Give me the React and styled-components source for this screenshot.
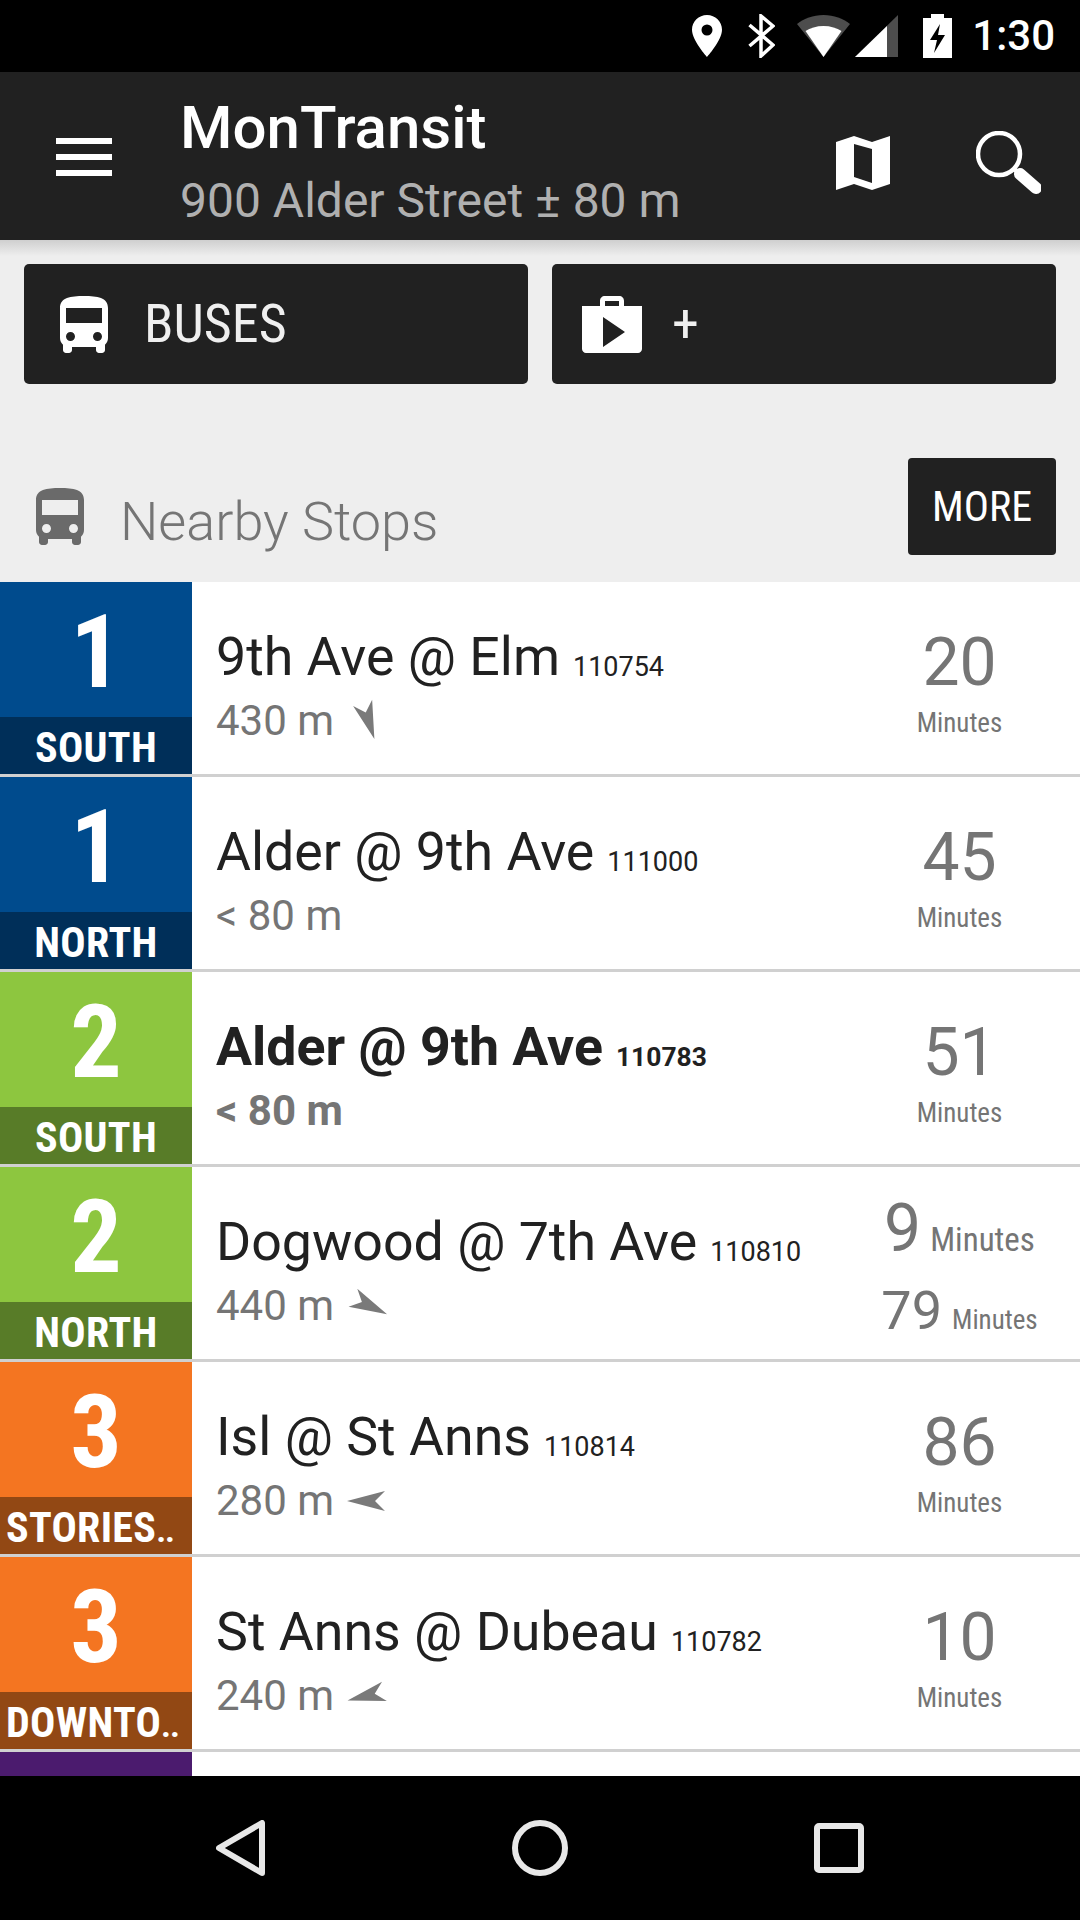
import React from "react";
import styled, { createGlobalStyle } from "styled-components";

const Global = createGlobalStyle`
  html, body { margin: 0; padding: 0; background: #eeeeee; }
  body { font-family: Roboto, "Liberation Sans", sans-serif; }
  * { box-sizing: border-box; }
`;

const Screen = styled.div`
  width: 1080px; height: 1920px; overflow: hidden; display: flex; flex-direction: column; background: #eeeeee;
`;
const StatusBar = styled.div`
  height: 72px; flex: none; background: #000; display: flex; align-items: center; justify-content: flex-end; padding-right: 25px; color: #fff;
`;
const StatusIcon = styled.svg`
  display: block; flex: none; margin-right: ${p => p.$mr || 0}px;
`;
const Clock = styled.span`
  font-size: 42px; line-height: 72px; margin-left: 20px; font-weight: 500;
`;
const Toolbar = styled.header`
  height: 168px; flex: none; background: #212121; display: flex; align-items: center; padding-left: 56px; position: relative; z-index: 2;
  &::after { content: ""; position: absolute; left: 0; right: 0; top: 100%; height: 16px; background: linear-gradient(#cfcfcf, #eeeeee); }
`;
const MenuIcon = styled.div`
  width: 56px; height: 38px; flex: none; display: flex; flex-direction: column; justify-content: space-between; margin-top: 2px;
  & > i { display: block; height: 6px; background: #fff; }
`;
const TitleBlock = styled.div`
  margin-left: 68px; flex: 1; min-width: 0; align-self: flex-start; padding-top: 21px;
`;
const Title = styled.div`
  font-size: 60px; font-weight: 500; color: #fff; line-height: 70px;
`;
const Subtitle = styled.div`
  font-size: 48px; color: #b0b0b0; line-height: 56px; margin-top: 10px;
`;
const ToolIcon = styled.svg`
  display: block; flex: none; margin-right: ${p => p.$mr}px; margin-top: 14px;
`;
const Buttons = styled.div`
  display: flex; gap: 24px; padding: 24px 24px 0;
`;
const Tile = styled.div`
  flex: 1; height: 120px; background: #212121; border-radius: 5px; display: flex; align-items: center; color: #fff;
`;
const TileIcon = styled.svg`
  display: block; flex: none; margin-left: ${p => p.$ml}px; margin-right: ${p => p.$mr}px;
`;
const TileLabel = styled.span`
  font-size: 54px; font-stretch: 75%; color: #efefef; line-height: 1;
`;
const SectionHead = styled.div`
  height: 198px; display: flex; align-items: flex-end; padding: 0 24px 0 36px; flex: none;
`;
const HeadIcon = styled.svg`
  display: block; flex: none; margin-bottom: 37px;
`;
const HeadTitle = styled.div`
  font-size: 54px; font-weight: 300; color: #757575; line-height: 60px; margin-left: 36px; margin-bottom: 30px; flex: 1;
`;
const MoreButton = styled.div`
  width: 148px; height: 97px; margin-bottom: 27px; background: #212121; border-radius: 4px; color: #fff; display: flex; align-items: center; justify-content: center;
  font-size: 42px; font-stretch: 75%;
`;
const List = styled.div`
  flex: 1; min-height: 0; overflow: hidden; background: #fff; display: flex; flex-direction: column;
`;
const Row = styled.div`
  height: 195px; flex: none; display: flex; position: relative; background: #fff; border-bottom: 3px solid #d0d0d0;
`;
const Route = styled.div`
  width: 192px; flex: none; background: ${p => p.$bg}; display: flex; flex-direction: column; color: #fff;
`;
const RouteNum = styled.div`
  flex: 1; display: flex; align-items: center; justify-content: center; font-size: 102px; font-weight: 700; font-stretch: 75%; line-height: 1; padding-top: 4px;
`;
const RouteDir = styled.div`
  height: 57px; flex: none; background: ${p => p.$bg}; font-size: 42px; font-weight: 700; font-stretch: 75%; line-height: 62px;
  text-align: ${p => (p.$left ? "left" : "center")}; padding-left: ${p => (p.$left ? 6 : 0)}px; letter-spacing: .3px; white-space: nowrap; overflow: hidden;
`;
const Dots = styled.span`
  font-size: 34px; letter-spacing: -1px;
`;
const Stop = styled.div`
  flex: 1; min-width: 0; padding: 45px 0 0 24px; font-weight: ${p => (p.$bold ? 700 : 400)};
`;
const StopName = styled.div`
  font-size: 53.7px; line-height: 60px; color: #212121; white-space: nowrap;
`;
const StopCode = styled.span`
  font-size: ${p => (p.$bold ? 26.4 : 27)}px; margin-left: 13px; position: relative; top: 1px;
`;
const Distance = styled.div`
  font-size: 42px; line-height: 50px; color: #757575; display: flex; align-items: center; margin-top: 0;
`;
const Arrow = styled.svg`
  display: block; flex: none; margin-left: 10px; overflow: visible;
`;
const Times = styled.div`
  width: 220px; flex: none; display: flex; flex-direction: column; align-items: center; justify-content: center; color: #757575; padding-right: 21px;
`;
const Big = styled.div`
  font-size: 66px; line-height: 70px; margin-top: 15px;
`;
const Small = styled.div`
  font-size: 27px; font-stretch: 75%; line-height: 40px; margin-top: 5px;
`;
const TimeLine = styled.div`
  display: flex; align-items: baseline; justify-content: center; gap: ${p => p.$gap}px; line-height: ${p => p.$lh}px;
`;
const TimeNum = styled.span`
  font-size: ${p => p.$size}px;
`;
const TimeUnit = styled.span`
  font-size: ${p => p.$size}px; font-stretch: 75%;
`;
const TwoLines = styled.div`
  padding-top: 17px;
`;
const LastRow = styled.div`
  flex: 1; width: 192px; background: #4b1b6e;
`;
const NavBar = styled.div`
  height: 144px; flex: none; background: #000; display: flex; align-items: center; position: relative;
  padding-left: 216px; gap: 246px;
`;

const BusPath = "M4 16c0 .88.39 1.67 1 2.22V20c0 .55.45 1 1 1h1c.55 0 1-.45 1-1v-1h8v1c0 .55.45 1 1 1h1c.55 0 1-.45 1-1v-1.78c.61-.55 1-1.34 1-2.22V6c0-3.5-3.58-4-8-4s-8 .5-8 4v10zm3.5 1c-.83 0-1.5-.67-1.5-1.5S6.67 14 7.5 14s1.5.67 1.5 1.5S8.33 17 7.5 17zm9 0c-.83 0-1.5-.67-1.5-1.5s.67-1.5 1.5-1.5 1.5.67 1.5 1.5-.67 1.5-1.5 1.5zm1.5-6H6V6h12v5z";

const Bus = ({ color, $ml, $mr, as: As = TileIcon }) => (
  <As $ml={$ml} $mr={$mr} width="48" height="57" viewBox="4 2 16 19" preserveAspectRatio="none" fill={color}>
    <path d={BusPath} />
  </As>
);

const Dart = ({ angle, dx = 0 }) => (
  <Arrow width="44" height="40" viewBox="-22 -20 44 40" fill="#7a7a7a">
    <polygon points="-19,0 19,-10 9,0 19,10" transform={`translate(${dx} 0) rotate(${angle})`} />
  </Arrow>
);

const rows = [
  { n: "1", dir: "SOUTH", c: "#004b8d", d: "#002f59", name: "9th Ave @ Elm", code: "110754", dist: "430 m", angle: -108, dx: 2.5, t: "20" },
  { n: "1", dir: "NORTH", c: "#004b8d", d: "#002f59", name: "Alder @ 9th Ave", code: "111000", dist: "< 80 m", t: "45" },
  { n: "2", dir: "SOUTH", c: "#8dc63f", d: "#587c28", name: "Alder @ 9th Ave", code: "110783", dist: "< 80 m", t: "51", bold: true },
  { n: "2", dir: "NORTH", c: "#8dc63f", d: "#587c28", name: "Dogwood @ 7th Ave", code: "110810", dist: "440 m", angle: -154, dx: 4, two: ["9", "79"] },
  { n: "3", dir: "STORIES", dots: true, c: "#f47521", d: "#924814", name: "Isl @ St Anns", code: "110814", dist: "280 m", angle: 0, t: "86", left: true },
  { n: "3", dir: "DOWNTO", dots: true, c: "#f47521", d: "#924814", name: "St Anns @ Dubeau", code: "110782", dist: "240 m", angle: -14, t: "10", left: true },
];

export default function App() {
  return (
    <Screen>
      <Global />
      <StatusBar>
        <StatusIcon $mr={26} width="30" height="42" viewBox="0 0 30 42" fill="#fff">
          <path fillRule="evenodd" d="M15 0C6.700 0 0 6.600 0 14.800 0 25.500 15 42 15 42s15-16.500 15-27.200C30 6.600 23.300 0 15 0zm0 20.500a5.500 5.500 0 1 1 0-11 5.500 5.500 0 0 1 0 11z" />
        </StatusIcon>
        <StatusIcon $mr={22} width="27" height="44" viewBox="0 0 27 44" fill="none" stroke="#fff" strokeWidth="3.500">
          <path d="M1.500 11 L25 31 L13 42 V2 L25 12 L1.500 32" />
        </StatusIcon>
        <StatusIcon $mr={5} width="53" height="42" viewBox="0 0 53 42">
          <path d="M26.500 42 L0 9 C7 3.500 16 0 26.500 0 S46 3.500 53 9z" fill="#4d4d4d" />
          <path d="M26.500 42 L8.500 16 C13 13 19.500 11 26.500 11 S40 13 44.500 16z" fill="#fff" />
        </StatusIcon>
        <StatusIcon $mr={25} width="43" height="42" viewBox="0 0 43 42">
          <path d="M43 0 V42 H0z" fill="#4d4d4d" />
          <path d="M32 11 V42 H0z" fill="#fff" />
        </StatusIcon>
        <StatusIcon width="29" height="44" viewBox="0 0 29 44">
          <path fillRule="evenodd" fill="#fff" d="M8 0h13v4h8v40H0V4h8zM17 10 L7 26h7l-3 13 11-18h-7z" />
        </StatusIcon>
        <Clock>1:30</Clock>
      </StatusBar>
      <Toolbar>
        <MenuIcon><i /><i /><i /></MenuIcon>
        <TitleBlock>
          <Title>MonTransit</Title>
          <Subtitle>900 Alder Street ± 80 m</Subtitle>
        </TitleBlock>
        <ToolIcon $mr={86} width="54" height="54" viewBox="0 0 54 54" fill="#fff">
          <path fillRule="evenodd" d="M0 6 L18 0 L36 6 L54 0 V48 L36 54 L18 48 L0 54z M18 8 V41 L36 47 V13z" />
        </ToolIcon>
        <ToolIcon $mr={39} width="65" height="65" viewBox="0 0 65 65">
          <circle cx="23" cy="23" r="21" fill="none" stroke="#fff" strokeWidth="4.500" />
          <path d="M38 38 L43 43" stroke="#fff" strokeWidth="4" />
          <path d="M44 43 L60 57" stroke="#fff" strokeWidth="12" strokeLinecap="round" />
        </ToolIcon>
      </Toolbar>
      <Buttons>
        <Tile>
          <Bus color="#fff" $ml={36} $mr={36} />
          <TileLabel>BUSES</TileLabel>
        </Tile>
        <Tile>
          <TileIcon $ml={30} $mr={30} width="60" height="57" viewBox="0 0 60 57">
            <path fillRule="evenodd" fill="#fff" d="M18 10V5c0-3 2-5 5-5h14c3 0 5 2 5 5v5h18v43c0 2-2 4-4 4H4c-2 0-4-2-4-4V10zm5 0h14V5H23zM21 21v30l22-15z" />
          </TileIcon>
          <TileLabel>+</TileLabel>
        </Tile>
      </Buttons>
      <SectionHead>
        <Bus color="#6a6a6a" as={HeadIcon} />
        <HeadTitle>Nearby Stops</HeadTitle>
        <MoreButton>MORE</MoreButton>
      </SectionHead>
      <List>
        {rows.map((r, i) => (
          <Row key={i}>
            <Route $bg={r.c}>
              <RouteNum>{r.n}</RouteNum>
              <RouteDir $bg={r.d} $left={r.left}>{r.dir}{r.dots && <Dots>..</Dots>}</RouteDir>
            </Route>
            <Stop $bold={r.bold}>
              <StopName>{r.name}<StopCode $bold={r.bold}>{r.code}</StopCode></StopName>
              <Distance>{r.dist}{r.angle !== undefined && <Dart angle={r.angle} dx={r.dx} />}</Distance>
            </Stop>
            {r.two ? (
              <Times>
                <TwoLines>
                  <TimeLine $gap={9} $lh={76}><TimeNum $size={66}>{r.two[0]}</TimeNum><TimeUnit $size={33}>Minutes</TimeUnit></TimeLine>
                  <TimeLine $gap={10} $lh={66}><TimeNum $size={54}>{r.two[1]}</TimeNum><TimeUnit $size={27}>Minutes</TimeUnit></TimeLine>
                </TwoLines>
              </Times>
            ) : (
              <Times><Big>{r.t}</Big><Small>Minutes</Small></Times>
            )}
          </Row>
        ))}
        <LastRow />
      </List>
      <NavBar>
        <svg width="50" height="56" viewBox="0 0 50 56" fill="none" stroke="#e8e8e8" strokeWidth="6" strokeLinejoin="round"><path d="M46 3 V53 L3 28z" /></svg>
        <svg width="56" height="56" viewBox="0 0 56 56" fill="none" stroke="#e8e8e8" strokeWidth="6"><circle cx="28" cy="28" r="25" /></svg>
        <svg width="50" height="50" viewBox="0 0 50 50" fill="none" stroke="#e8e8e8" strokeWidth="6" strokeLinejoin="round"><rect x="3" y="3" width="44" height="44" rx="2" /></svg>
      </NavBar>
    </Screen>
  );
}
